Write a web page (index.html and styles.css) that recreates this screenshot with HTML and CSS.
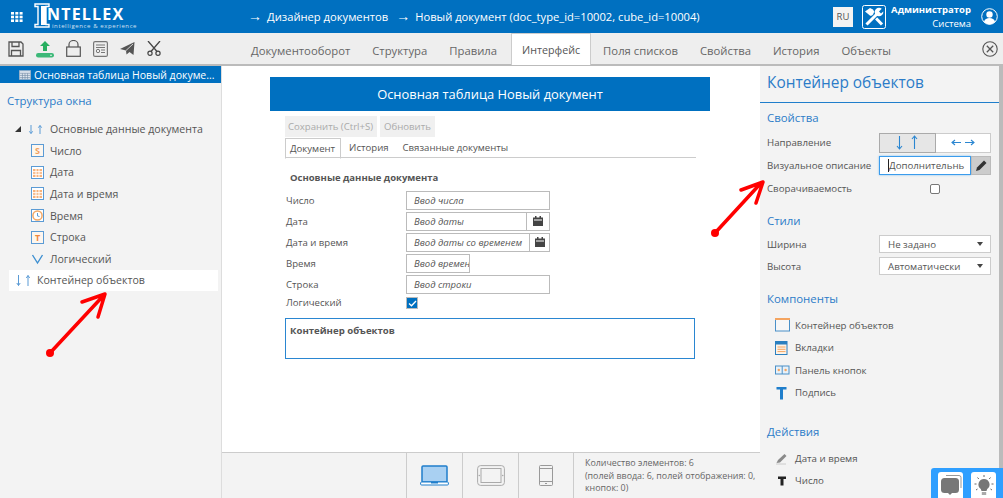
FILE: index.html
```html
<!DOCTYPE html>
<html lang="ru">
<head>
<meta charset="utf-8">
<title>Intellex</title>
<link rel="stylesheet" href="styles.css">
</head>
<body>
<header class="topbar">
  <svg class="apps" width="12" height="10" viewBox="0 0 12 10"><g fill="#fff"><rect x="0" y="0" width="3" height="2.6"/><rect x="4.3" y="0" width="3" height="2.6"/><rect x="8.6" y="0" width="3" height="2.6"/><rect x="0" y="3.7" width="3" height="2.6"/><rect x="4.3" y="3.7" width="3" height="2.6"/><rect x="8.6" y="3.7" width="3" height="2.6"/><rect x="0" y="7.4" width="3" height="2.6"/><rect x="4.3" y="7.4" width="3" height="2.6"/><rect x="8.6" y="7.4" width="3" height="2.6"/></g></svg>
  <div class="logo">
    <svg width="16" height="25" viewBox="0 0 16 25"><path d="M1 1h14v2.500h-3v18h3V24H1v-2.500h3v-18H1z" fill="none" stroke="#fff" stroke-width="1.400"/><rect x="7" y="3" width="5" height="19" fill="#fff"/></svg>
    <div class="logo-text"><div class="logo-name">NTELLEX</div><div class="logo-sub">intelligence &amp; experience</div></div>
  </div>
  <div class="crumbs"><span class="crumb"><span class="arr">→</span>Дизайнер документов</span><span class="crumb"><span class="arr">→</span>Новый документ (doc_type_id=10002, cube_id=10004)</span></div>
  <div class="lang">RU</div>
  <svg class="tools" width="24" height="24" viewBox="0 0 24 24"><rect x="0.500" y="0.500" width="23" height="23" rx="2" fill="none" stroke="#fff"/><path d="M8 7l12 12.500" stroke="#fff" stroke-width="3"/><path d="M3 6.500L8 3l3 1.500 1.500 2.500L8.500 11z" fill="#fff"/><path d="M4.500 19.500L15 9" stroke="#0070c0" stroke-width="5"/><path d="M4.500 19.500L15 9" stroke="#fff" stroke-width="3"/><circle cx="17" cy="7" r="4.300" fill="#fff"/><path d="M17 6.500L21 2.500 23 5l-4 3.500z" fill="#0070c0"/></svg>
  <div class="user"><div class="user-name">Администратор</div><div class="user-role">Система</div></div>
  <svg class="avatar" width="17" height="17" viewBox="0 0 17 17"><circle cx="8.500" cy="8.500" r="7.800" fill="none" stroke="#fff"/><circle cx="8.500" cy="6.500" r="3.200" fill="#fff"/><path d="M3 14c.5-3 3-4 5.500-4s5 1 5.500 4a7.500 7.500 0 0 1-11 0z" fill="#fff"/></svg>
</header>

<nav class="toolbar">
  <div class="tool-icons">
    <svg width="16" height="16" viewBox="0 0 16 16"><path d="M1 1h12l2 2v12H1z M4 1v4.500h7V1 M3.500 15V9.500h9V15" fill="none" stroke="#555" stroke-width="1.300"/></svg>
    <svg width="18" height="18" viewBox="0 0 18 18"><path d="M9 1l5 5h-3v5H7V6H4z" fill="#27ae60"/><rect x="0" y="13" width="18" height="4.500" rx="2.200" fill="#3cb878"/><circle cx="15" cy="15.200" r=".8" fill="#fff"/></svg>
    <svg width="15" height="17" viewBox="0 0 15 17"><rect x=".7" y="7" width="13.600" height="9.300" fill="none" stroke="#555" stroke-width="1.200"/><path d="M3 7V4.500a4.500 4 0 0 1 9 0V7" fill="none" stroke="#555" stroke-width="1.200"/></svg>
    <svg width="15" height="16" viewBox="0 0 15 16"><rect x=".6" y=".6" width="13.800" height="14.800" rx="1.500" fill="#eee" stroke="#777" stroke-width="1.200"/><path d="M3 4h9M3 6.500h9M8 9h4M8 11.500h4" stroke="#777"/><circle cx="5" cy="10" r="1.700" fill="none" stroke="#777"/></svg>
    <svg width="15" height="13" viewBox="0 0 15 13"><path d="M0 7L14.500 0l-1 13-4-3-3 2.500-.5-4z" fill="#555"/><path d="M6 8.500L13 2" stroke="#eee" stroke-width=".8"/></svg>
    <svg width="14" height="15" viewBox="0 0 14 15"><path d="M1 0l9 10.500M13 0L4 10.500" stroke="#444" stroke-width="1.300"/><circle cx="3" cy="12.300" r="2.100" fill="none" stroke="#444" stroke-width="1.200"/><circle cx="11" cy="12.300" r="2.100" fill="none" stroke="#444" stroke-width="1.200"/></svg>
  </div>
  <div class="tabs">
    <span class="tab">Документооборот</span><span class="tab">Структура</span><span class="tab">Правила</span><span class="tab tab-active">Интерфейс</span><span class="tab">Поля списков</span><span class="tab">Свойства</span><span class="tab">История</span><span class="tab">Объекты</span>
  </div>
  <svg class="close" width="16" height="16" viewBox="0 0 16 16"><circle cx="8" cy="8" r="7.200" fill="none" stroke="#555" stroke-width="1.100"/><path d="M4.800 4.800l6.400 6.400M11.200 4.800l-6.400 6.400" stroke="#555" stroke-width="1.300"/></svg>
</nav>

<main class="workspace">
  <aside class="left">
    <div class="selected">
      <svg width="12" height="10" viewBox="0 0 14 11"><rect x=".5" y=".5" width="13" height="10" fill="#dfe6ef" stroke="#9fb3c8"/><path d="M1 3.500h12M1 6h12M1 8.500h12M4 3.500v7M7 3.500v7M10 3.500v7" stroke="#6d86a3" stroke-width=".7"/></svg>
      <span>Основная таблица Новый докуме...</span>
    </div>
    <h3 class="left-title">Структура окна</h3>
    <ul class="tree">
      <li class="tree-root"><i class="tri"></i><svg class="updown" width="15" height="9" viewBox="0 0 15 9"><path d="M3 0v8.500M1.300 6.300L3 8.500l1.700-2.200M12 9V.5M10.300 2.700L12 .5l1.700 2.200" fill="none" stroke="#5b9bd5"/></svg><span>Основные данные документа</span></li>
      <li class="tree-item"><svg class="ti" width="13" height="13" viewBox="0 0 13 13"><rect x=".5" y=".5" width="12" height="12" fill="#fdf6ee" stroke="#5b9bd5"/><text x="6.500" y="10" font-size="9" font-weight="700" text-anchor="middle" fill="#f0a15e" font-family="Open Sans">S</text></svg><span>Число</span></li>
      <li class="tree-item"><svg class="ti" width="13" height="13" viewBox="0 0 13 13"><rect x=".5" y=".5" width="12" height="12" fill="#fff" stroke="#5b9bd5"/><path d="M2 3h9v8H2z" fill="#f7b27a"/><path d="M5 3v8M8 3v8M2 5.700h9M2 8.300h9" stroke="#fff"/></svg><span>Дата</span></li>
      <li class="tree-item"><svg class="ti" width="13" height="13" viewBox="0 0 13 13"><rect x=".5" y=".5" width="12" height="12" fill="#fff" stroke="#5b9bd5"/><path d="M2 3h9v8H2z" fill="#f7b27a"/><path d="M5 3v8M8 3v8M2 5.700h9M2 8.300h9" stroke="#fff"/></svg><span>Дата и время</span></li>
      <li class="tree-item"><svg class="ti" width="13" height="13" viewBox="0 0 13 13"><rect x=".5" y=".5" width="12" height="12" fill="#fff" stroke="#5b9bd5"/><circle cx="6.500" cy="6.500" r="4.600" fill="#fff" stroke="#f2a765" stroke-width="1.500"/><path d="M6.500 4v3l2 .5" fill="none" stroke="#5b9bd5"/></svg><span>Время</span></li>
      <li class="tree-item"><svg class="ti" width="13" height="13" viewBox="0 0 13 13"><rect x=".5" y=".5" width="12" height="12" fill="#fdf6ee" stroke="#5b9bd5"/><text x="6.500" y="10" font-size="9" font-weight="700" text-anchor="middle" fill="#f0883e" font-family="Open Sans">T</text></svg><span>Строка</span></li>
      <li class="tree-item"><svg class="ti" width="13" height="13" viewBox="0 0 13 13"><path d="M1.500 3l5 8 5-8" fill="none" stroke="#3d8fd1" stroke-width="1.400"/></svg><span>Логический</span></li>
      <li class="tree-picked"><svg class="updown-big" width="14" height="11" viewBox="0 0 14 11"><path d="M2.500 0v10.500M.8 8L2.500 10.500 4.200 8M12 11V.5M10.300 3L12 .5 13.700 3" fill="none" stroke="#5b9bd5"/></svg><span>Контейнер объектов</span></li>
    </ul>
  </aside>

  <section class="center">
    <div class="canvas">
      <div class="doc-head">Основная таблица Новый документ</div>
      <div class="doc">
        <div class="btns"><span class="btn">Сохранить (Ctrl+S)</span><span class="btn">Обновить</span></div>
        <div class="doc-tabs"><span class="doc-tab doc-tab-on">Документ</span><span class="doc-tab">История</span><span class="doc-tab">Связанные документы</span></div>
        <div class="group-title">Основные данные документа</div>
        <div class="field"><label>Число</label><div class="inp wide">Ввод числа</div></div>
        <div class="field"><label>Дата</label><div class="inp wide"><span class="inp-t">Ввод даты</span><span class="cal"><svg width="10" height="10" viewBox="0 0 10 10"><path d="M0 1.500h10V10H0zM2 0h1.500v2H2zM6.500 0H8v2H6.500z" fill="#444"/><path d="M1 4h8" stroke="#fff"/></svg></span></div></div>
        <div class="field"><label>Дата и время</label><div class="inp wide"><span class="inp-t">Ввод даты со временем</span><span class="cal cal-n"><svg width="10" height="10" viewBox="0 0 10 10"><path d="M0 1.500h10V10H0zM2 0h1.500v2H2zM6.500 0H8v2H6.500z" fill="#444"/><path d="M1 4h8" stroke="#fff"/></svg></span></div></div>
        <div class="field"><label>Время</label><div class="inp narrow">Ввод времени</div></div>
        <div class="field"><label>Строка</label><div class="inp wide">Ввод строки</div></div>
        <div class="field field-check"><label>Логический</label><span class="check"><svg width="9" height="7" viewBox="0 0 9 7"><path d="M1 3.500l2.500 2.300L8 1" fill="none" stroke="#fff" stroke-width="1.300"/></svg></span></div>
        <div class="container-box">Контейнер объектов</div>
      </div>
    </div>
    <footer class="bottom">
      <div class="device device-on"><svg width="29" height="21" viewBox="0 0 29 21"><rect x="2" y="1" width="25" height="16" rx="1" fill="#a9d0f2" stroke="#1f7ecb" stroke-width="1.500"/><rect x=".6" y="17" width="27.800" height="3" rx="1" fill="#fff" stroke="#1f7ecb"/><path d="M11 17h7v1.500h-7z" fill="#1f7ecb"/></svg></div>
      <div class="device"><svg width="28" height="21" viewBox="0 0 28 21"><rect x=".6" y=".6" width="26.800" height="19.800" rx="3" fill="#f3f3f3" stroke="#aaa"/><rect x="4" y="3.500" width="20" height="14" fill="#f3f3f3" stroke="#aaa"/><circle cx="2.300" cy="10.500" r=".8" fill="#aaa"/><circle cx="25.700" cy="10.500" r=".8" fill="#aaa"/></svg></div>
      <div class="device"><svg width="14" height="21" viewBox="0 0 14 21"><rect x=".5" y=".5" width="13" height="20" rx="1" fill="#f3f3f3" stroke="#999"/><path d="M.5 3.500h13M.5 16.500h13" stroke="#999"/><path d="M6 18.500h2" stroke="#999"/></svg></div>
      <div class="stats">Количество элементов: 6<br>(полей ввода: 6, полей отображения: 0,<br>кнопок: 0)</div>
    </footer>
  </section>

  <aside class="right">
    <h2 class="right-title">Контейнер объектов</h2>
    <div class="right-body">
      <h3 class="sec sec-first">Свойства</h3>
      <div class="prop"><label>Направление</label><div class="dir"><span class="dir-btn dir-on"><svg width="24" height="15" viewBox="0 0 24 15"><path d="M4.500 1v13M2 11l2.500 3L7 11M19.500 14V1M17 4l2.500-3L22 4" fill="none" stroke="#2a86d1" stroke-width="1.100"/></svg></span><span class="dir-btn"><svg width="24" height="9" viewBox="0 0 24 9"><path d="M10 4.500H1M4 2L1 4.500 4 7M14 4.500h9M20 2l3 2.500L20 7" fill="none" stroke="#2a86d1" stroke-width="1.100"/></svg></span></div></div>
      <div class="prop"><label>Визуальное описание</label><div class="desc"><span class="desc-inp">Дополнительнь</span><span class="desc-btn"><svg width="11" height="11" viewBox="0 0 11 11"><path d="M0 11l1-3.500L8 .5 10.500 3l-7 7z" fill="#333"/></svg></span></div></div>
      <div class="prop prop-check"><label>Сворачиваемость</label><div class="cb-wrap"><span class="cb"></span></div></div>
      <h3 class="sec sec-styles">Стили</h3>
      <div class="prop prop-sel"><label>Ширина</label><div class="select"><span>Не задано</span><i class="caret"></i></div></div>
      <div class="prop prop-sel"><label>Высота</label><div class="select"><span>Автоматически</span><i class="caret"></i></div></div>
      <h3 class="sec sec-comp">Компоненты</h3>
      <ul class="comps">
        <li><svg width="15" height="14" viewBox="0 0 15 14"><rect x=".5" y="1" width="14" height="12" fill="#f7f7f7" stroke="#4a90c8"/><rect x="0" y="0" width="15" height="2" fill="#f4a460"/></svg><span>Контейнер объектов</span></li>
        <li><svg width="15" height="14" viewBox="0 0 15 14"><rect x=".5" y=".5" width="11.500" height="13" fill="#fdf3e7" stroke="#2a7fc0"/><rect x="1" y="1" width="11" height="2.500" fill="#2a7fc0"/><path d="M2.500 6h8M2.500 8.300h8M2.500 10.600h8" stroke="#f4a460"/></svg><span>Вкладки</span></li>
        <li><svg width="15" height="14" viewBox="0 0 15 14"><rect x=".5" y="3" width="13.500" height="8" fill="#e8f1f8" stroke="#4a90c8"/><path d="M7.200 3v8" stroke="#4a90c8"/><circle cx="3.800" cy="7" r="1.200" fill="#f4a460"/><circle cx="10.600" cy="7" r="1.200" fill="#f4a460"/></svg><span>Панель кнопок</span></li>
        <li><svg width="15" height="14" viewBox="0 0 15 14"><path d="M1.500 1h10v2.500H8v10H5v-10H1.500z" fill="#1f7ecb"/></svg><span>Подпись</span></li>
      </ul>
      <h3 class="sec sec-act">Действия</h3>
      <ul class="comps">
        <li><svg width="15" height="13" viewBox="0 0 15 13"><path d="M1.500 11L3 8 9.500 2l2 2L5 10.500z" fill="#8a8a8a"/><path d="M1 12h10" stroke="#ccc"/></svg><span>Дата и время</span></li>
        <li><svg width="15" height="13" viewBox="0 0 15 13"><path d="M3 2.500h8V5H8.500v6.500h-3V5H3z" fill="#222"/></svg><span>Число</span></li>
      </ul>
    </div>
    <div class="scroll"></div>
  </aside>
</main>

<div class="help">
  <span class="help-btn"><svg width="22" height="22" viewBox="0 0 22 22"><path d="M6 1.500h13a2 2 0 0 1 2 2V14" fill="none" stroke="#999"/><rect x="1" y="4" width="18" height="15" rx="3.500" fill="#777"/><path d="M8 19h4l-2 2z" fill="#777"/></svg></span>
  <span class="help-btn help-btn-b"><svg width="22" height="22" viewBox="0 0 22 22"><path d="M11 5a5.500 5.500 0 0 0-3.200 10l.7 2h5l.7-2A5.500 5.500 0 0 0 11 5z" fill="#777"/><rect x="8.800" y="18" width="4.400" height="3" fill="#aaa"/><path d="M11 1v2M4.500 3.500l1.300 1.500M17.500 3.500L16.200 5M1.500 10h2M18.500 10h2M3 16l1.500-1M19 16l-1.500-1" stroke="#666"/></svg></span>
</div>

<svg class="mark mark-left" width="75" height="70" viewBox="0 0 75 70"><path d="M4 62L58 4M36 11L59 3 52 26" fill="none" stroke="#f00" stroke-width="3.500" stroke-linecap="round" stroke-linejoin="round"/><circle cx="4" cy="62" r="4" fill="#f00"/></svg>
<svg class="mark mark-right" width="60" height="62" viewBox="0 0 60 62"><path d="M4 54L50 4M30 11L52 3 45 24" fill="none" stroke="#f00" stroke-width="3.500" stroke-linecap="round" stroke-linejoin="round"/><circle cx="4" cy="54" r="4" fill="#f00"/></svg>
</body>
</html>
```
FILE: styles.css
```css
* { box-sizing: border-box; }
html, body { margin: 0; height: 498px; overflow: hidden; }
body { position: relative; width: 1003px; font-family: "Open Sans", sans-serif; font-size: 11px; color: #555; background: #fff; display: flex; flex-direction: column; }
h2, h3, ul { margin: 0; padding: 0; font-weight: 400; list-style: none; }
svg { display: block; flex: none; }

.topbar { height: 33px; flex: none; background: #0070c0; color: #fff; display: flex; align-items: center; position: relative; }
.apps { margin-left: 11px; flex: none; }
.logo { display: flex; margin-left: 11px; align-items: flex-start; height: 28px; width: 92px; flex: none; }
.logo-text { margin-left: -3px; margin-top: 3px; }
.logo-name { font-weight: 700; font-size: 16px; line-height: 17px; letter-spacing: 1.200px; white-space: nowrap; }
.logo-sub { font-size: 6px; line-height: 6px; letter-spacing: .6px; margin-left: 5px; opacity: .8; white-space: nowrap; }
.crumbs { margin-left: 122px; display: flex; gap: 8px; font-size: 11.200px; white-space: nowrap; width: 585px; flex: none; }
.arr { font-family: "Liberation Sans", sans-serif; font-size: 14px; line-height: 1; margin-right: 5px; }
.lang { width: 20px; height: 20px; background: #f3f3f3; color: #555; text-align: center; line-height: 20px; font-size: 9.500px; flex: none; }
.tools { margin-left: 9px; }
.user { width: 85px; text-align: right; line-height: 14px; font-size: 9.500px; flex: none; }
.user-name { font-weight: 700; }
.avatar { margin-left: 10px; }

.toolbar { height: 33px; flex: none; background: #eee; border-bottom: 2px solid #bbb; display: flex; position: relative; }
.tool-icons { width: 240px; display: flex; align-items: center; gap: 12px; padding-left: 8px; flex: none; }
.tabs { display: flex; }
.tab { padding: 10px 11px 0; font-size: 11.300px; color: #666; height: 33px; white-space: nowrap; }
.tab-active { background: #fff; border: 1px solid #ccc; border-bottom: 0; padding: 9px 10px 0; height: 32px; color: #555; font-size: 10.700px; margin: 0 1px 0 3px; }
.close { position: absolute; right: 5px; top: 8px; }

.workspace { flex: 1; display: flex; min-height: 0; }
.left { width: 222px; background: #f3f3f3; border-right: 1px solid #ddd; flex: none; }
.selected { height: 17px; background: #0070c0; color: #fff; display: flex; align-items: center; gap: 3px; padding-left: 19px; font-size: 10.500px; white-space: nowrap; }
.left-title { color: #2c7cc8; font-size: 11.400px; margin: 10px 0 0 7px; line-height: 16px; }
.tree { margin-top: 9px; font-size: 10.600px; color: #555; }
.tree li { display: flex; align-items: center; white-space: nowrap; }
.tree-root { height: 22px; padding-left: 15px; }
.tri { width: 0; height: 0; border-style: solid; border-width: 0 0 6px 6px; border-color: transparent transparent #333 transparent; margin-right: 7px; flex: none; }
.updown { margin-right: 7px; }
.tree-item { height: 21.600px; padding-left: 31px; gap: 6px; }
.tree-picked { height: 21px; margin: 0 3px 0 9px; background: #fff; padding-left: 7px; }
.updown-big { margin-right: 7px; }

.center { flex: 1; display: flex; flex-direction: column; min-width: 0; }
.canvas { flex: 1; padding: 11px 0 0 48px; min-height: 0; background: #fff; }
.doc-head { width: 440px; height: 34px; background: #0070c0; color: #fff; text-align: center; font-size: 12.900px; line-height: 34px; }
.doc { width: 410px; margin-left: 15px; }
.btns { display: flex; gap: 3px; padding-top: 5px; }
.btn { height: 21px; padding: 0 4px; background: #f0f0f0; color: #aaa; font-size: 9.600px; line-height: 21px; white-space: nowrap; }
.btn:first-child { padding-left: 3px; }
.doc-tabs { display: flex; height: 21px; border-bottom: 1px solid #ccc; width: 411px; }
.doc-tab { font-size: 9.600px; line-height: 19px; padding: 0 7px; white-space: nowrap; margin-top: 1px; }
.doc-tab-on { border: 1px solid #ccc; border-bottom: 1px solid #fff; height: 21px; padding: 0 5px 0 4px; margin-right: 1px; }
.group-title { font-weight: 700; font-size: 9.500px; line-height: 14px; margin: 13px 0 0 5px; color: #555; }
.field { display: flex; align-items: center; height: 17.500px; }
.field + .field { margin-top: 3.500px; }
.group-title + .field { margin-top: 6px; height: 19px; }
.group-title + .field + .field { margin-top: 2.500px; }
.field label { width: 121px; font-size: 9.600px; padding-left: 1px; }
.inp { height: 19px; border: 1px solid #bbb; font-style: italic; font-size: 9.500px; color: #555; padding-left: 7px; line-height: 17px; display: flex; overflow: hidden; white-space: nowrap; }
.wide { width: 144px; }
.narrow { width: 64px; }
.inp-t { flex: 1; }
.cal { width: 23px; border-left: 1px solid #bbb; display: flex; align-items: center; justify-content: center; flex: none; }
.cal-n { width: 20px; }
.field-check { height: 15px; }
.field-check label { margin-top: -3px; }
.check { width: 12px; height: 12px; background: #0070c0; border: 1px solid #bbb; display: flex; align-items: center; justify-content: center; margin-top: -2px; }
.container-box { border: 1px solid #2a86d1; width: 410px; height: 41px; margin-top: 6px; font-weight: 700; font-size: 9.600px; padding: 5px 4px; line-height: 14px; }
.bottom { height: 46px; flex: none; background: #f3f3f3; border-top: 1px solid #ccc; display: flex; padding-left: 184px; }
.device { width: 56px; border-left: 1px solid #ccc; display: flex; align-items: center; justify-content: center; }
.device:nth-child(3) { width: 55px; }
.stats { border-left: 1px solid #ccc; padding: 4px 0 0 11px; font-size: 8.900px; line-height: 12.500px; color: #666; white-space: nowrap; flex: 1; }

.right { width: 243px; flex: none; background: #f3f3f3; position: relative; }
.right-title { height: 37px; border-bottom: 1px solid #1f7ecb; font-size: 15.400px; line-height: 34px; color: #2c7cc8; padding-left: 7px; }
.scroll { position: absolute; top: 0; bottom: 0; right: 0; width: 4px; background: #bbb; }
.right-body { padding: 0 0 0 7px; }
.sec { color: #2c7cc8; font-size: 11.400px; line-height: 16px; }
.sec-first { margin-top: 7px; margin-bottom: 5px; }
.sec-styles { margin-top: 13px; margin-bottom: 4px; }
.sec-comp { margin-top: 14px; margin-bottom: 7px; }
.sec-act { margin-top: 20px; margin-bottom: 7px; }
.prop { display: flex; align-items: center; height: 23px; font-size: 9.700px; color: #555; }
.prop-sel { height: 22px; }
.prop label { width: 112px; white-space: nowrap; flex: none; }
.dir { display: flex; width: 112px; height: 20px; border: 1px solid #ccc; background: #fff; }
.dir-btn { flex: 1; display: flex; align-items: center; justify-content: center; }
.dir-on { background: #e6e6e6; border: 1px solid #aaa; margin: -1px 0 -1px -1px; }
.desc { display: flex; width: 112px; height: 19px; }
.desc-inp { width: 92px; border: 1px solid #3b9cec; background: #fff; padding-left: 8px; font-size: 9.700px; line-height: 17px; overflow: hidden; white-space: nowrap; box-shadow: 0 0 2px #7fbdf0; }
.desc-inp::before { content: ""; display: inline-block; width: 1px; height: 13px; background: #222; vertical-align: -3px; }
.desc-btn { flex: 1; background: #ccc; border: 1px solid #bbb; display: flex; align-items: center; justify-content: center; }
.cb-wrap { width: 112px; display: flex; justify-content: center; }
.cb { width: 10px; height: 10px; border: 1px solid #777; border-radius: 2px; background: #fff; }
.select { width: 112px; height: 18px; border: 1px solid #ccc; background: #fff; display: flex; align-items: center; justify-content: space-between; padding: 0 7px 0 8px; font-size: 9.700px; }
.caret { width: 0; height: 0; border-style: solid; border-width: 4px 3.500px 0; border-color: #444 transparent transparent; }
.comps { padding-left: 8px; }
.comps li { display: flex; align-items: center; gap: 5px; height: 22.500px; font-size: 9.700px; color: #555; white-space: nowrap; }

.help { position: absolute; right: 0; bottom: 0; width: 72px; height: 30px; background: #2f9fff; border-radius: 3px 0 0 0; display: flex; gap: 8px; padding: 4px 0 0 7px; }
.help-btn { width: 25px; height: 26px; background: #fff; border-radius: 3px 3px 0 0; display: flex; align-items: center; justify-content: center; }
.mark { position: absolute; }
.mark-left { left: 46px; top: 291px; }
.mark-right { left: 711px; top: 179px; }
```
